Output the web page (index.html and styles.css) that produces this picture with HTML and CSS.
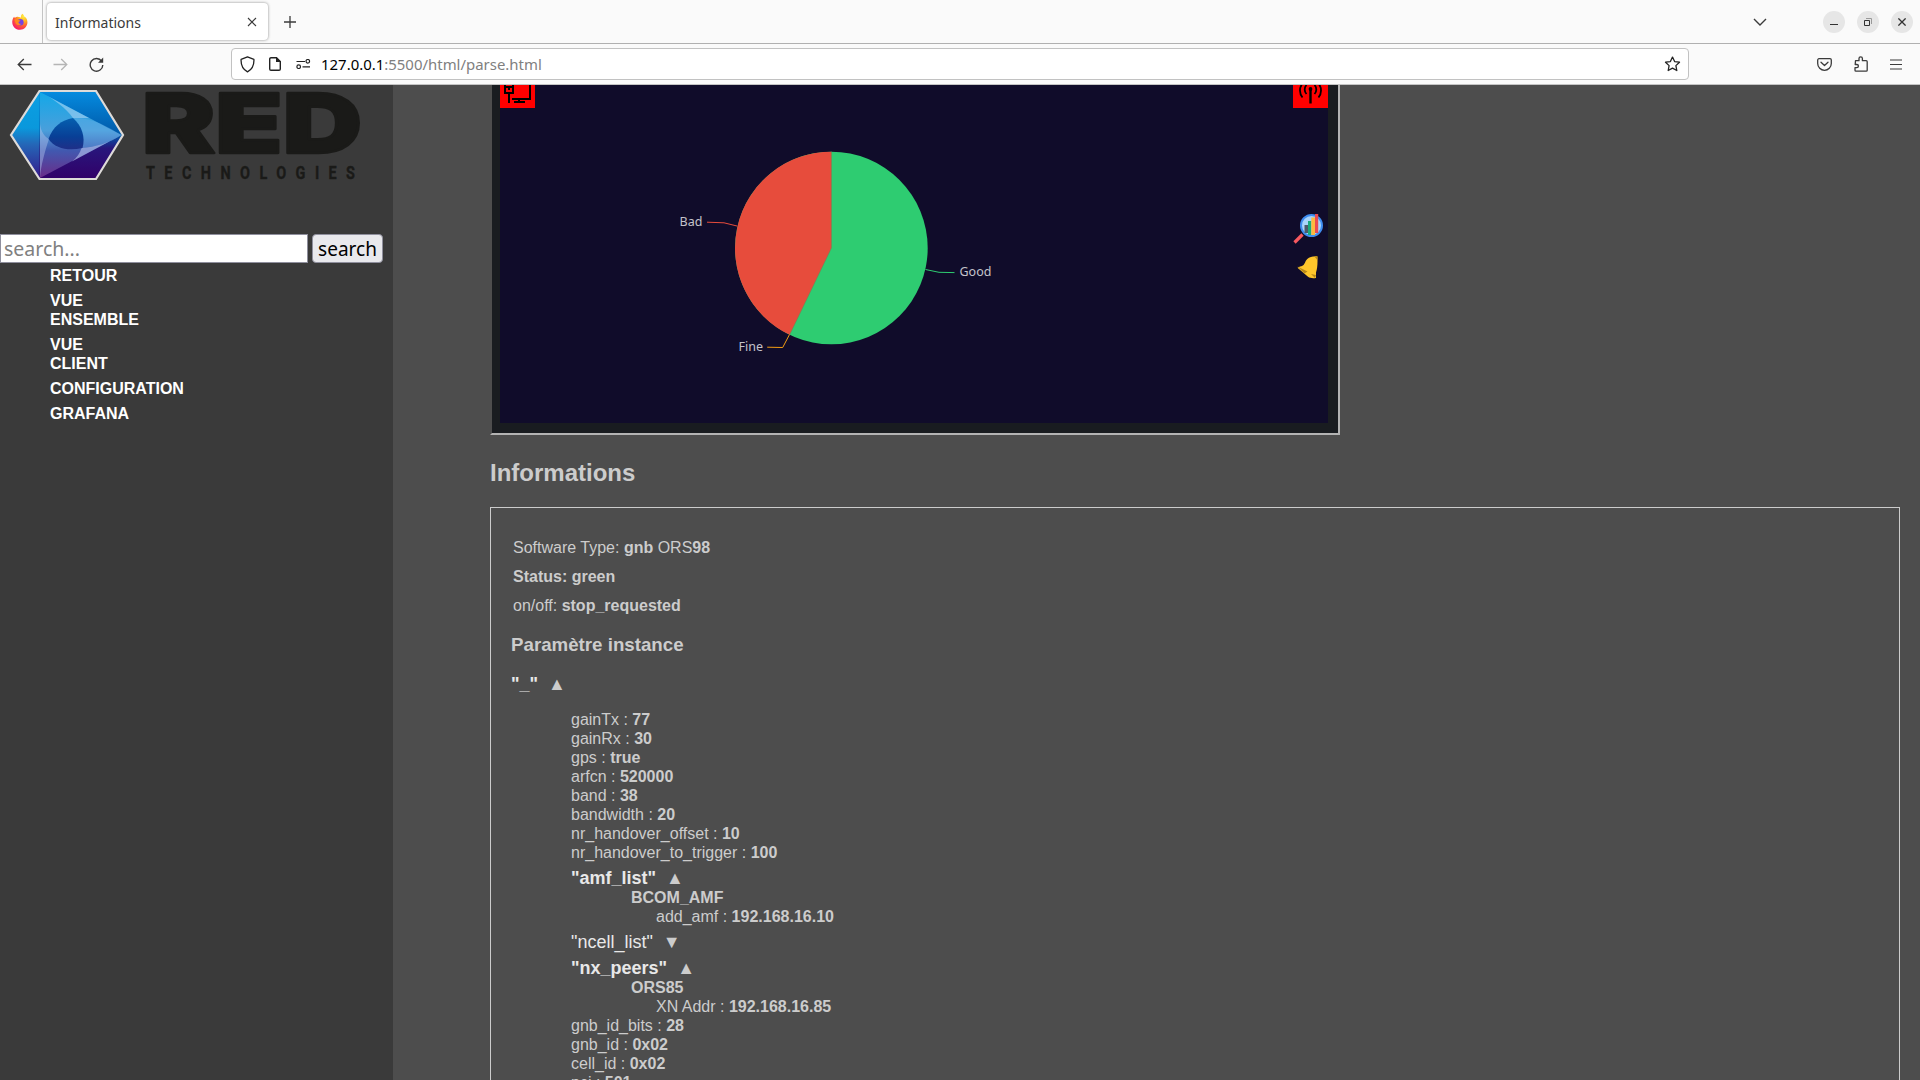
FILE: index.html
```
<!DOCTYPE html>
<html lang="fr">
<head>
<meta charset="utf-8">
<title>Informations</title>
<link rel="stylesheet" href="styles.css">
</head>
<body>
<div class="browser">
  <header class="tabbar">
    <div class="firefox-cell">
      <svg width="16" height="18" viewBox="0 0 16 18">
        <defs>
          <radialGradient id="fox" cx=".75" cy=".15" r=".95"><stop offset="0" stop-color="#fff044"/><stop offset=".35" stop-color="#ffb01f"/><stop offset=".65" stop-color="#ff5a36"/><stop offset="1" stop-color="#f5156c"/></radialGradient>
        </defs>
        <path d="M10.3.8c1.3 1 1.8 2 2.1 3 .8.2 1.8 1 2.3 2.2C17 11 13.600 16.800 8 16.800S-.7 11.500.5 7c.3-1.300 1-2.600 1.800-3.200l.4 1.300C3.800 4 5 3.600 6.500 3.900c1 0 2 .4 2.500.9C8.700 3.300 9.200 1.800 10.300.8z" fill="url(#fox)"/>
        <circle cx="8.300" cy="9.300" r="3.300" fill="#7542e5"/>
        <path d="M2.300 6.500C4 5.500 6 6 7.200 7.200L8.700 7.800 6.500 9c0 1.400 1.200 2.400 3 1.600-1 1.700-4 2.200-5.600.2z" fill="#ff8a1e"/>
      </svg>
    </div>
    <div class="tab"><span class="tab-title">Informations</span>
      <svg width="10" height="10" viewBox="0 0 10 10"><path d="M1 1l8 8M9 1l-8 8" stroke="#3b3b3b" stroke-width="1.100"/></svg>
    </div>
    <svg class="plus" width="12" height="12" viewBox="0 0 12 12"><path d="M6 0v12M0 6h12" stroke="#3b3b3b" stroke-width="1.300"/></svg>
    <div class="window-tools">
      <svg class="chevron" width="14" height="8" viewBox="0 0 14 8"><path d="M1 1l6 6 6-6" fill="none" stroke="#3b3b3b" stroke-width="1.400"/></svg>
      <span class="win"><svg width="8" height="8" viewBox="0 0 8 8"><path d="M0 6.500h8" stroke="#333"/></svg></span>
      <span class="win"><svg width="8" height="8" viewBox="0 0 8 8"><path d="M.5 2.500h5v5h-5z" fill="none" stroke="#333"/><path d="M2 .5h5.500v5.500" fill="none" stroke="#999"/></svg></span>
      <span class="win"><svg width="8" height="8" viewBox="0 0 8 8"><path d="M.4.4l7.200 7.200M7.600.4L.4 7.600" stroke="#333" stroke-width="1.300"/></svg></span>
    </div>
  </header>
  <div class="toolbar">
    <svg class="back" width="15" height="13" viewBox="0 0 15 13"><path d="M14.500 6.500H1M6.800 1L1.200 6.500 6.800 12" fill="none" stroke="#3b3b3b" stroke-width="1.300"/></svg>
    <svg class="forward" width="15" height="13" viewBox="0 0 15 13"><path d="M.5 6.500H14M8.200 1l5.600 5.500L8.200 12" fill="none" stroke="#b5b5b5" stroke-width="1.300"/></svg>
    <svg class="reload" width="15" height="15" viewBox="0 0 15 15"><path d="M12.700 4.300A6.300 6.300 0 1 0 13.800 8" fill="none" stroke="#3b3b3b" stroke-width="1.400"/><path d="M14.200.6v5.200H9z" fill="#3b3b3b"/></svg>
    <div class="urlbar">
      <svg width="15" height="17" viewBox="0 0 15 17"><path d="M7.500.9l6.400 2.500c.3 5.400-1.600 10-6.400 12.500C2.700 13.400.8 8.800 1.100 3.400z" fill="none" stroke="#222" stroke-width="1.300" stroke-linejoin="round"/></svg>
      <svg class="page-icon" width="12" height="14" viewBox="0 0 12 14"><path d="M2 .7h5.500l3.800 3.800V12a1.300 1.300 0 0 1-1.300 1.300H2A1.300 1.300 0 0 1 .7 12V2A1.300 1.300 0 0 1 2 .7z" fill="none" stroke="#222" stroke-width="1.400"/><path d="M7 0l5 5H7z" fill="#222"/></svg>
      <svg class="perm-icon" width="15" height="10" viewBox="0 0 15 10"><g fill="none" stroke="#222" stroke-width="1.200"><path d="M.5 2.500H9M6.500 7.800H14"/><circle cx="11.800" cy="2.300" r="1.800"/><circle cx="2.700" cy="7.700" r="1.800"/></g></svg>
      <span class="url"><b>127.0.0.1</b>:5500/html/parse.html</span>
      <svg class="star" width="17" height="16" viewBox="0 0 17 16"><path d="M8.500 1.100l2.100 4.500 4.900.6-3.600 3.400.9 4.900-4.300-2.400-4.300 2.400.9-4.900L1.500 6.200l4.900-.6z" fill="none" stroke="#222" stroke-width="1.300" stroke-linejoin="round"/></svg>
    </div>
    <div class="actions">
      <svg width="15" height="13" viewBox="0 0 15 13"><path d="M2 .7h11c.7 0 1.300.6 1.300 1.300v3.500a6.800 6.800 0 0 1-13.600 0V2C.7 1.300 1.300.7 2 .7zM4 4.200l3.500 3.300L11 4.200" fill="none" stroke="#3b3b3b" stroke-width="1.300" stroke-linecap="round" stroke-linejoin="round"/></svg>
      <svg width="14" height="16" viewBox="0 0 14 16"><path d="M1.500 4.700H5V2.500a1.700 1.700 0 0 1 3.400 0v2.200h3.800c.6 0 1 .4 1 1v8.500c0 .6-.4 1-1 1H2c-.6 0-1-.4-1-1v-2.500h1.800a1.500 1.500 0 0 0 0-3.200H1.200z" fill="none" stroke="#3b3b3b" stroke-width="1.300" stroke-linejoin="round"/></svg>
      <svg width="12" height="11" viewBox="0 0 12 11"><path d="M0 1h12M0 5.500h12M0 10h12" stroke="#3b3b3b" stroke-width="1.200"/></svg>
    </div>
  </div>
  <div class="page">
    <aside class="sidebar">
      <svg class="logo" width="393" height="149" viewBox="0 85 393 149">
        <defs>
          <linearGradient id="hexTop" x1="0" y1="0" x2="0" y2="1"><stop offset="0" stop-color="#058ce0"/><stop offset=".5" stop-color="#0058a8"/><stop offset=".65" stop-color="#28167c"/><stop offset="1" stop-color="#320068"/></linearGradient>
          <linearGradient id="hexLeft" x1="0" y1="0" x2="0" y2="1"><stop offset="0" stop-color="#0a9fe3"/><stop offset=".42" stop-color="#0a98dc"/><stop offset=".6" stop-color="#2468b8"/><stop offset="1" stop-color="#36178a"/></linearGradient>
          <linearGradient id="tri" x1="0" y1="0" x2="0" y2="1"><stop offset="0" stop-color="#12a8e8"/><stop offset=".45" stop-color="#4a9fdb"/><stop offset=".68" stop-color="#4159b0"/><stop offset="1" stop-color="#6b2b88"/></linearGradient>
          <linearGradient id="eye" x1="0" y1="0" x2="0" y2="1"><stop offset="0" stop-color="#0560b0"/><stop offset=".6" stop-color="#083f96"/><stop offset="1" stop-color="#1f2f88"/></linearGradient>
        </defs>
        <path d="M39.500 91h56.500L123 135 96 179H39.500L11 135z" fill="url(#hexTop)"/>
        <path d="M39.500 91v88L11 135z" fill="url(#hexLeft)"/>
        <path d="M40 92L121.500 135 40 178z" fill="url(#tri)"/>
        <path d="M40 92c14 7 26 16 33 26h16z" fill="#a9d2f4" fill-opacity=".6"/>
        <path d="M73 118c18-1 34 8 48.500 17-14 9-26 12-40 13 4-12 1-22-8.500-30z" fill="#6db2ea" fill-opacity=".3"/>
        <path d="M40 124c1 8 5 13 9 15-4 12-8 26-9 39z" fill="#b4c6ee" fill-opacity=".45"/>
        <path d="M81.500 148c14-1 28-5 40-13L72 161.500c5-4 8-8 9.500-13.500z" fill="#b9c4ee" fill-opacity=".6"/>
        <path d="M48.500 139c4-12 13-19 24.500-21 9 8 12.500 19 9.500 30-14 3-27 1-34-9z" fill="url(#eye)"/>
        <path d="M39.500 91h56.500L123 135 96 179H39.500L11 135z" fill="none" stroke="#dedbd9" stroke-width="2.200"/>
        <g class="wordmark">
          <text class="wordmark-red" x="142" y="152.500" textLength="220" lengthAdjust="spacingAndGlyphs">RED</text>
          <text class="wordmark-tech" transform="translate(146 178.500) scale(.76 1)" textLength="275">TECHNOLOGIES</text>
        </g>
      </svg>
      <div class="search"><input class="search-field" type="text" placeholder="search..."><button class="search-button">search</button></div>
      <nav class="nav">
        <a>RETOUR</a>
        <a>VUE<br>ENSEMBLE</a>
        <a>VUE<br>CLIENT</a>
        <a>CONFIGURATION</a>
        <a>GRAFANA</a>
      </nav>
    </aside>
    <main class="content">
      <div class="frame">
        <svg class="chart" width="828" height="338" viewBox="500 85 828 338">
          <path fill="#f00" d="M500 85h35v23h-35zM1293 85h35v23h-35z"/>
          <g fill="none" stroke="#000" stroke-width="2">
            <path d="M505 84v9h8v-9M505 87h8M509 87v3M509 93v10M512 99h18V85M519 99v3M514 102h11"/>
          </g>
          <g fill="none" stroke="#000" stroke-width="1.800">
            <path d="M1310.500 90v13.500" stroke-width="2.400"/><circle cx="1310.500" cy="89" r="1" fill="#000"/>
            <path d="M1306.500 94a6.500 6.500 0 0 1 0-9M1314.500 94a6.500 6.500 0 0 0 0-9M1302.500 97.500a11 11 0 0 1 0-14M1318.500 97.500a11 11 0 0 0 0-14"/>
          </g>
          <circle cx="831.400" cy="248" r="96.300" fill="#2ecc71"/>
          <path d="M831.400 248V151.700A96.300 96.300 0 0 0 789.600 334.800z" fill="#e74c3c"/>
          <path d="M831.400 151.700V248L789.600 334.800" fill="none" stroke="#7d7a50" stroke-width=".6"/>
          <g fill="none" stroke-width="1">
            <path d="M737 226l-13-3.200-17-.6" stroke="#e74c3c"/>
            <path d="M789.500 334.500l-6.800 13-15.500-.3" stroke="#f39c12"/>
            <path d="M925.500 269.500l13.500 2.800 15.500.3" stroke="#2ecc71"/>
          </g>
          <g class="chart-label">
            <text x="679.500" y="226">Bad</text><text x="738.500" y="351">Fine</text><text x="959.500" y="276">Good</text>
          </g>
          <path d="M1294.500 242.500l8-8" stroke="#f8595f" stroke-width="3.200"/>
          <circle cx="1311.500" cy="225.500" r="10.500" fill="#a9d5fb" stroke="#3e8df0" stroke-width="2"/>
          <path d="M1304.500 225h3.500v8h-3.500z" fill="#4c5a6c"/><path d="M1308 221h3.300v14H1308z" fill="#1aa97c"/><path d="M1311.300 217.500h3.700V235h-3.700z" fill="#fdb93e"/><path d="M1315 214h3.200v19h-3.200z" fill="#e84b52"/>
          <path d="M1313 256.500h4.500v5c0 4-.5 8-1.500 11v5.500c-3 .5-6 .2-8-1.200l-10.500-9 2.500-1.300c4-.5 4.500-3 6-6 1.500-2.500 4-3.500 7-4z" fill="#fec62b"/><path d="M1314 256h3.300v4zM1297.500 266.500l10 5-3 2zM1311 274l5 1-1 3z" fill="#b98a18"/>
        </svg>
      </div>
      <h2 class="title">Informations</h2>
      <section class="panel">
        <div class="facts">
          <div>Software Type: <b>gnb</b> ORS<b>98</b></div>
          <div><b>Status: green</b></div>
          <div>on/off: <b>stop_requested</b></div>
        </div>
        <h3 class="subtitle">Paramètre instance</h3>
        <div class="group root"><b>"_"</b><span class="caret">▲</span></div>
        <div class="params">
          <div>gainTx : <b>77</b></div>
          <div>gainRx : <b>30</b></div>
          <div>gps : <b>true</b></div>
          <div>arfcn : <b>520000</b></div>
          <div>band : <b>38</b></div>
          <div>bandwidth : <b>20</b></div>
          <div>nr_handover_offset : <b>10</b></div>
          <div>nr_handover_to_trigger : <b>100</b></div>
          <div class="group"><b>"amf_list"</b><span class="caret">▲</span></div>
          <div class="entry"><b>BCOM_AMF</b><div class="detail">add_amf : <b>192.168.16.10</b></div></div>
          <div class="group">"ncell_list"<span class="caret">▼</span></div>
          <div class="group"><b>"nx_peers"</b><span class="caret">▲</span></div>
          <div class="entry"><b>ORS85</b><div class="detail">XN Addr : <b>192.168.16.85</b></div></div>
          <div>gnb_id_bits : <b>28</b></div>
          <div>gnb_id : <b>0x02</b></div>
          <div>cell_id : <b>0x02</b></div>
          <div>pci : <b>501</b></div>
        </div>
      </section>
    </main>
  </div>
</div>
</body>
</html>
```
FILE: styles.css
```
* { box-sizing: border-box; }
body { margin: 0; font: 16px/19px "Liberation Sans", sans-serif; }
svg { display: block; flex: none; }
.browser { width: 1920px; height: 1080px; overflow: hidden; display: flex; flex-direction: column; }

.tabbar { height: 44px; flex: none; display: flex; align-items: center; background: #fafafa; border-bottom: 1px solid #b0b0b0; }
.firefox-cell { width: 43px; height: 43px; padding-left: 12px; display: flex; align-items: center; border-right: 1px solid #c4c4c4; }
.tab { width: 221px; height: 37px; margin-left: 4px; padding: 0 11px 0 8px; display: flex; align-items: center; justify-content: space-between; background: #fff; border-radius: 4px; box-shadow: 0 0 3px rgba(0,0,0,.45); font: 14px/20px "Noto Sans", sans-serif; color: #3b3b3b; }
.tab-title { padding-top: 2px; }
.plus { margin-left: 16px; }
.window-tools { margin-left: auto; display: flex; align-items: center; padding-right: 7px; gap: 12px; }
.chevron { margin-right: 44px; }
.win { width: 22px; height: 22px; border-radius: 50%; background: #e6e6e6; display: flex; align-items: center; justify-content: center; }

.toolbar { height: 41px; flex: none; display: flex; align-items: center; background: #fafafa; border-bottom: 1px solid #c4c4c4; }
.back { margin-left: 16.500px; }
.forward { margin-left: 21.500px; }
.reload { margin-left: 20.500px; }
.urlbar { width: 1458px; height: 32px; margin-left: 127.500px; padding: 0 7px 0 7.500px; display: flex; align-items: center; background: #fff; border: 1px solid #c2c2c2; border-radius: 4px; }
.page-icon { margin-left: 14.500px; }
.perm-icon { margin-left: 15px; }
.url { margin-left: 10px; padding-bottom: 1px; font: 14.950px/20px "Noto Sans", sans-serif; color: #808080; }
.url b { font-weight: 400; color: #000; }
.star { margin-left: auto; }
.actions { margin-left: auto; padding-right: 18px; display: flex; align-items: center; gap: 22px; }

.page { flex: 1; min-height: 0; display: flex; }
.sidebar { width: 393px; flex: none; background: #3a3a3a; }
.wordmark { fill: #1a1a18; }
.wordmark-red { font: 900 82px "Inter", sans-serif; stroke: #1a1a18; stroke-width: 2.500px; stroke-linejoin: round; }
.wordmark-tech { font: bold 19px "Roboto", sans-serif; stroke: #1a1a18; stroke-width: .4px; }
.search { display: flex; gap: 4px; height: 29px; }
.search-field { width: 308px; height: 29px; padding: 0 3px; border: 1px solid #8f8f9d; background: #fff; font: 19.500px "Noto Sans", sans-serif; }
.search-field::placeholder { color: #808080; }
.search-button { width: 71px; height: 29px; padding: 0; border: 1px solid #8f8f9d; border-radius: 4px; background: #e9e9ed; color: #000; font: 19px/24px "Noto Sans", sans-serif; }
.nav { display: flex; flex-direction: column; gap: 6px; padding: 3px 0 0 50px; font-weight: 700; color: #fff; }

.content { flex: 1; padding: 0 20px 0 97px; background: #4d4d4d; color: #ccc; }
.frame { width: 850px; height: 350px; padding: 0 10px 10px 8px; border: 2px solid #b3b3b3; border-top: 0; border-left-color: #4d4d4d; background: #191c20; }
.chart { background: #100c2a; }
.chart-label { font: 12.500px "Noto Sans", sans-serif; fill: #c4c3ca; }
.title { margin: 24px 0 20px; font-size: 24px; line-height: 28px; }
.panel { border: 1px solid #ccc; padding: 30px 20px 0; height: 620px; }
.facts { display: flex; flex-direction: column; gap: 10px; padding-left: 2px; }
.subtitle { margin: 19px 0 14px; font-size: 18.720px; line-height: 21px; }
.group { padding-top: 6px; font-size: 18px; line-height: 20px; color: #e8e8e8; }
.caret { margin-left: 10px; color: #ccc; }
.root { padding-top: 5px; line-height: 21px; margin-bottom: 15px; }
.params { padding-left: 60px; }
.entry { padding-left: 60px; }
.detail { padding-left: 25px; }
```
